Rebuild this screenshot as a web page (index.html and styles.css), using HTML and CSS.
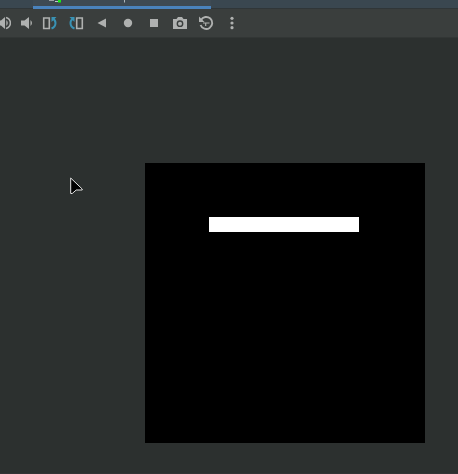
FILE: index.html
```html
<!DOCTYPE html>
<html lang="en">
<head>
<meta charset="utf-8">
<title>Emulator</title>
<link rel="stylesheet" href="styles.css">
</head>
<body>
<div class="window">
  <header class="tabs">
    <div class="tab">
      <svg class="tab-mark" width="93" height="6" viewBox="0 0 93 6"><path d="M16 0h5v1h-5z" fill="#9ba3a5"/><path d="M22 1h3v1h-3z" fill="#c2c9c9"/><path d="M25 0h3v2.500h-3z" fill="#14ee18"/><path d="M91.500 0v2.500" stroke="#aeb7bd" stroke-width="1"/></svg>
    </div>
  </header>
  <nav class="toolbar">
    <svg class="tool" viewBox="0 0 26 26"><path d="M13 10.500h3L20 7v12l-4-3.500h-3z" fill="#afb1b0"/><path d="M21.300 10q3 3 0 6z" fill="#afb1b0"/><path d="M21 7.500q4.400 1.500 4.400 5.500T21 18.500" fill="none" stroke="#afb1b0" stroke-width="1.500"/></svg>
    <svg class="tool" viewBox="0 0 26 26"><path d="M10 10.500h3.500L18 7v12l-4.500-3.500H10z" fill="#afb1b0"/><path d="M19.500 10q3 3 0 6z" fill="#afb1b0"/></svg>
    <svg class="tool" viewBox="0 0 26 26"><path d="M6.700 8v10.500h5.600V8z" fill="none" stroke="#afb1b0" stroke-width="1.600"/><path d="M15 8.500q3.500 1 3.500 4.500 0 4-4 5.500" fill="none" stroke="#3992b4" stroke-width="2"/><path d="M14.500 7h5l-5 5z" fill="#3992b4"/></svg>
    <svg class="tool" viewBox="0 0 26 26"><path d="M13.700 8v10.500h5.600V8z" fill="none" stroke="#afb1b0" stroke-width="1.600"/><path d="M11 8.500q-3.500 1-3.500 4.500 0 4 4 5.500" fill="none" stroke="#3992b4" stroke-width="2"/><path d="M11.500 7h-5l5 5z" fill="#3992b4"/></svg>
    <svg class="tool" viewBox="0 0 26 26"><path d="M8.500 13L17 8.500v9z" fill="#afb1b0"/></svg>
    <svg class="tool" viewBox="0 0 26 26"><circle cx="13" cy="13" r="4.200" fill="#afb1b0"/></svg>
    <svg class="tool" viewBox="0 0 26 26"><path d="M9 9h8v8H9z" fill="#afb1b0"/></svg>
    <svg class="tool" viewBox="0 0 26 26"><path d="M6 9h3.500l1.500-2h4l1.500 2H20v10H6z" fill="#afb1b0"/><circle cx="13" cy="13.700" r="2.700" fill="none" stroke="#3a3e3d" stroke-width="1.400"/></svg>
    <svg class="tool" viewBox="0 0 26 26"><path d="M8 10A6 6 0 1 1 7.600 15" fill="none" stroke="#afb1b0" stroke-width="1.900"/><path d="M6 6.500v5.500h5.500z" fill="#afb1b0"/><path d="M10 13h6.500M12.700 13v3" stroke="#afb1b0" stroke-width="1.200"/></svg>
    <svg class="tool" viewBox="0 0 26 26"><g fill="#afb1b0"><circle cx="13" cy="8.300" r="1.600"/><circle cx="13" cy="13" r="1.600"/><circle cx="13" cy="17.700" r="1.600"/></g></svg>
  </nav>
  <main class="stage">
    <div class="screen"><div class="paddle"></div></div>
    <svg class="cursor" width="14" height="19" viewBox="0 0 14 19"><path d="M.7 1v15.500h1.500l4-3.500h6v-1z" fill="#000" stroke="#e4e4e4" stroke-width="1"/></svg>
  </main>
</div>
</body>
</html>
```
FILE: styles.css
```css
body {
  margin: 0;
  background: #2c302f;
}

.window {
  display: flex;
  flex-direction: column;
  height: 474px;
  overflow: hidden;
}

.tabs {
  box-sizing: border-box;
  flex: none;
  height: 9px;
  padding-left: 33px;
  background: #3a4750;
  border-bottom: 1px solid #303638;
}

.tab {
  box-sizing: border-box;
  width: 178px;
  height: 9px;
  border-bottom: 3px solid #4a83bd;
  background: #3e4a53;
}

.tab-mark {
  display: block;
}

.toolbar {
  display: flex;
  flex: none;
  box-sizing: border-box;
  height: 29px;
  margin-left: -15px;
  padding-top: 1px;
  background: #3a3e3d;
  border-bottom: 1px solid #323635;
}

.tool {
  flex: none;
  width: 26px;
  height: 26px;
}

.stage {
  position: relative;
  flex: 1;
  padding: 125px 0 0 145px;
  background: #2c302f;
  border-bottom: 1px solid #333335;
}

.screen {
  box-sizing: border-box;
  width: 280px;
  height: 280px;
  padding: 54px 0 0 64px;
  background: #000;
}

.paddle {
  width: 150px;
  height: 15px;
  background: #fff;
}

.cursor {
  position: absolute;
  left: 70px;
  top: 139px;
}
```
